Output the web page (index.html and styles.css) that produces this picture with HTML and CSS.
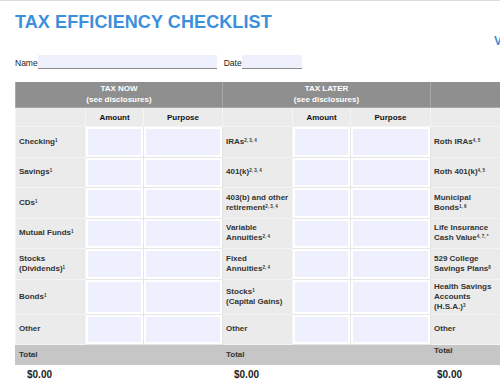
FILE: index.html
```html
<!DOCTYPE html>
<html>
<head>
<meta charset="utf-8">
<link rel="stylesheet" href="styles.css">
</head>
<body>
<div class="page">
  <span class="logo-edge">V</span>
  <h1 class="title">TAX EFFICIENCY CHECKLIST</h1>
  <div class="fields">
    <span class="flabel">Name</span>
    <span class="field name-field"></span>
    <span class="flabel date-label">Date</span>
    <span class="field date-field"></span>
  </div>
  <table class="sheet">
    <colgroup>
      <col class="c-label"><col class="c-amt"><col class="c-purp">
      <col class="c-label"><col class="c-amt"><col class="c-purp2">
      <col class="c-label3">
    </colgroup>
    <tr class="head">
      <th colspan="3">TAX NOW<br>(see disclosures)</th>
      <th colspan="3">TAX LATER<br>(see disclosures)</th>
      <th></th>
    </tr>
    <tr class="sub">
      <td></td><td>Amount</td><td>Purpose</td>
      <td></td><td>Amount</td><td>Purpose</td>
      <td></td>
    </tr>
    <tr class="data">
      <td class="lbl">Checking<sup>1</sup></td><td class="in"></td><td class="in"></td>
      <td class="lbl">IRAs<sup>2, 3, 4</sup></td><td class="in"></td><td class="in"></td>
      <td class="lbl">Roth IRAs<sup>4, 5</sup></td>
    </tr>
    <tr class="data">
      <td class="lbl">Savings<sup>1</sup></td><td class="in"></td><td class="in"></td>
      <td class="lbl">401(k)<sup>2, 3, 4</sup></td><td class="in"></td><td class="in"></td>
      <td class="lbl">Roth 401(k)<sup>4, 5</sup></td>
    </tr>
    <tr class="data">
      <td class="lbl">CDs<sup>1</sup></td><td class="in"></td><td class="in"></td>
      <td class="lbl">403(b) and other retirement<sup>2, 3, 4</sup></td><td class="in"></td><td class="in"></td>
      <td class="lbl">Municipal Bonds<sup>1, 6</sup></td>
    </tr>
    <tr class="data">
      <td class="lbl">Mutual Funds<sup>1</sup></td><td class="in"></td><td class="in"></td>
      <td class="lbl">Variable Annuities<sup>2, 4</sup></td><td class="in"></td><td class="in"></td>
      <td class="lbl">Life Insurance Cash Value<sup>4, 7, *</sup></td>
    </tr>
    <tr class="data">
      <td class="lbl">Stocks (Dividends)<sup>1</sup></td><td class="in"></td><td class="in"></td>
      <td class="lbl">Fixed Annuities<sup>2, 4</sup></td><td class="in"></td><td class="in"></td>
      <td class="lbl">529 College Savings Plans<sup>8</sup></td>
    </tr>
    <tr class="data">
      <td class="lbl">Bonds<sup>1</sup></td><td class="in"></td><td class="in"></td>
      <td class="lbl">Stocks<sup>1</sup><br>(Capital Gains)</td><td class="in"></td><td class="in"></td>
      <td class="lbl">Health Savings Accounts (H.S.A.)<sup>3</sup></td>
    </tr>
    <tr class="data">
      <td class="lbl">Other</td><td class="in"></td><td class="in"></td>
      <td class="lbl">Other</td><td class="in"></td><td class="in"></td>
      <td class="lbl">Other</td>
    </tr>
    <tr class="total">
      <td colspan="3">Total</td>
      <td colspan="3">Total</td>
      <td class="total-last">Total</td>
    </tr>
    <tr class="sum">
      <td colspan="3">$0.00</td>
      <td colspan="3">$0.00</td>
      <td>$0.00</td>
    </tr>
  </table>
</div>
</body>
</html>
```
FILE: styles.css
```css
html, body {
  margin: 0;
  padding: 0;
  background: #ffffff;
  overflow: hidden;
  width: 500px;
  height: 380px;
}
body {
  border-top: 1px solid #dcdcdc;
  box-sizing: border-box;
  font-family: "Liberation Sans", Arial, sans-serif;
  color: #333333;
}
.page {
  position: relative;
  padding: 10px 0 0 15px;
  width: 520px;
}
.logo-edge {
  position: absolute;
  left: 494px;
  top: 33px;
  font: bold 12px/14px "Liberation Sans", Arial, sans-serif;
  color: #3c8fdb;
}
.title {
  margin: 0;
  font: bold 18px/22px "Liberation Sans", Arial, sans-serif;
  color: #3c8fdb;
  letter-spacing: 0.1px;
}
.fields {
  display: flex;
  align-items: flex-end;
  margin-top: 22px;
  height: 14px;
}
.flabel {
  font-size: 8.5px;
  line-height: 10px;
  color: #222222;
  padding-bottom: 1px;
}
.field {
  display: block;
  height: 13px;
  background: #eef0fc;
  border-bottom: 1px solid #8a8a8a;
}
.name-field { width: 179px; }
.date-label { margin-left: 7px; }
.date-field { width: 60px; }

.sheet {
  margin-top: 13px;
  border-collapse: collapse;
  table-layout: fixed;
  width: 487px;
  font-size: 8px;
}
.c-label { width: 70px; }
.c-amt { width: 58px; }
.c-purp { width: 79px; }
.c-purp2 { width: 80px; }
.c-label3 { width: 72px; }

.sheet td, .sheet th {
  padding: 0;
  border: 1px solid #f4f4f4;
}
.head th {
  background: #8f8f8f;
  color: #ffffff;
  font-weight: bold;
  line-height: 10.5px;
  height: 25px;
  text-align: center;
  border-color: #a9a9a9;
  border-top: 0;
}
.sub td {
  background: #ebebeb;
  height: 18px;
  text-align: center;
  font-weight: bold;
  color: #111111;
}
.data { height: 30.5px; }
.lbl {
  background: #ebebeb;
  font-weight: bold;
  color: #333333;
  line-height: 10px;
  padding: 2px 3px !important;
  vertical-align: middle;
}
.in {
  background: #eef1fd;
  box-shadow: inset 0 0 0 2px #ffffff;
  border-color: #e6e6e6 !important;
}
sup {
  font-size: 4.5px;
  line-height: 0;
  vertical-align: 2px;
}
.total td {
  background: #c6c6c6;
  font-weight: bold;
  color: #333333;
  height: 18px;
  padding-left: 3px;
  border-color: #c6c6c6;
}
.total .total-last {
  vertical-align: top;
  padding-top: 1px;
}
.sum td {
  background: #ffffff;
  font-weight: bold;
  font-size: 10px;
  color: #222222;
  height: 18px;
  padding-left: 11px;
  border-color: #ffffff;
}
.sum td:last-child { padding-left: 6px; }
```
